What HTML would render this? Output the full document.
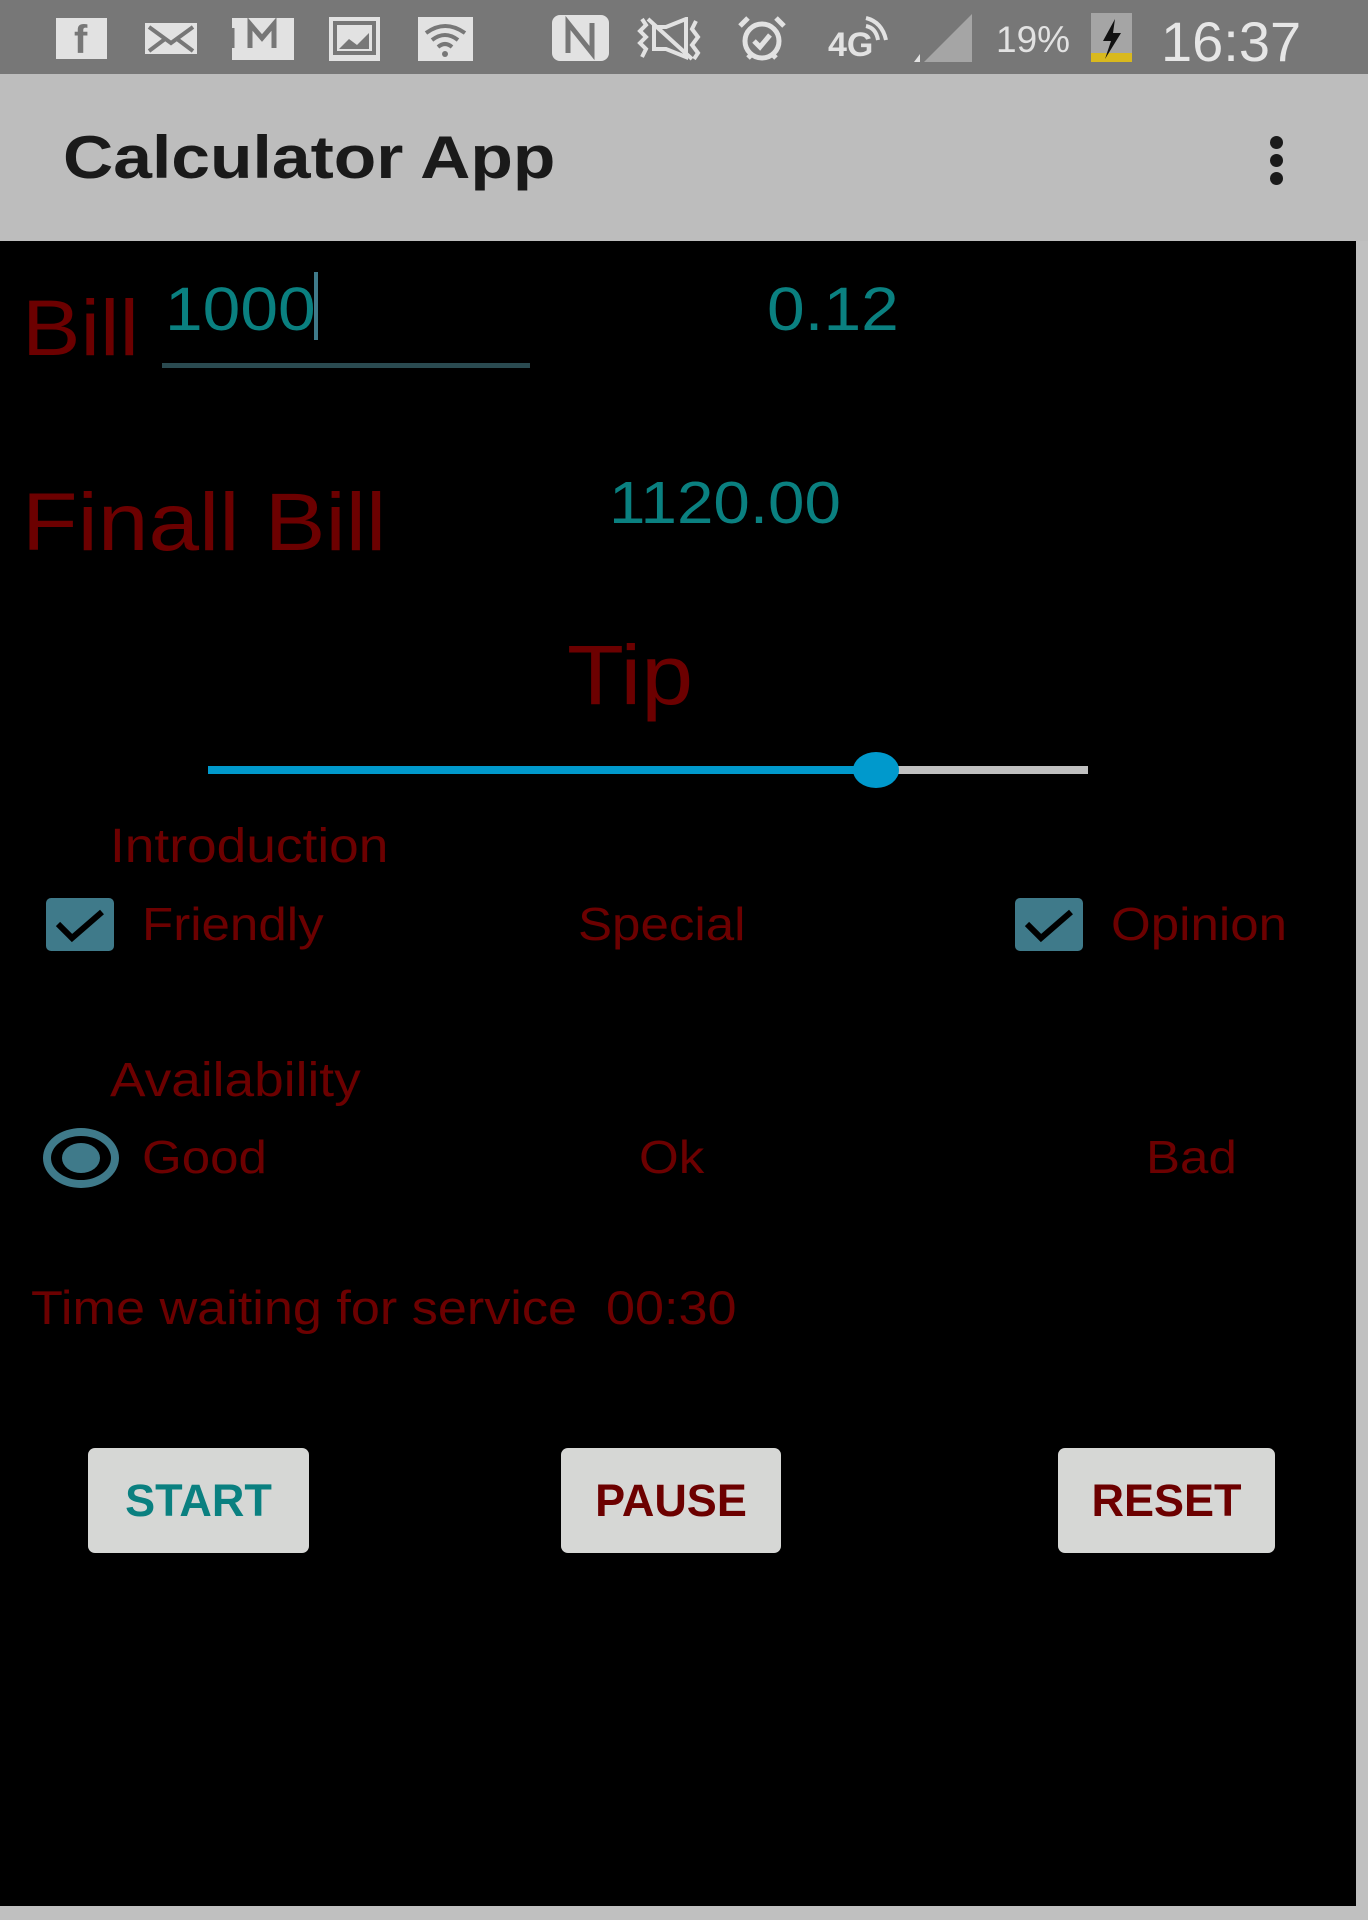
<!DOCTYPE html>
<html><head><meta charset="utf-8">
<style>
html,body{margin:0;padding:0;}
body{width:1368px;height:1920px;background:#000;position:relative;overflow:hidden;font-family:"Liberation Sans",sans-serif;}
.t{position:absolute;line-height:1;white-space:pre;transform-origin:0 0;transform:scaleX(1.11);}
.r{color:#6c0000;}
.c{color:#0a8080;}
.btn{position:absolute;top:1448px;height:105px;background:#d6d7d5;border-radius:7px;font-weight:bold;font-size:45px;text-align:center;line-height:105px;}
.ic{position:absolute;background:#e2e2e2;}
</style></head><body>
<!-- status bar -->
<div style="position:absolute;left:0;top:0;width:1368px;height:74px;background:#777;"></div>
<div class="ic" style="left:56px;top:18px;width:51px;height:41px;"></div>
<div style="position:absolute;left:74px;top:18px;color:#777;font:bold 40px 'Liberation Sans',sans-serif;line-height:44px;">f</div>
<div class="ic" style="left:145px;top:23px;width:52px;height:31px;"></div>
<svg style="position:absolute;left:145px;top:23px" width="52" height="31"><path d="M4 4 L26 20 L48 4 M4 28 L20 16 M48 28 L32 16" stroke="#777" stroke-width="4" fill="none"/></svg>
<div class="ic" style="left:232px;top:18px;width:62px;height:42px;"></div>
<svg style="position:absolute;left:232px;top:18px" width="62" height="42"><path d="M0 10 V30 M18 30 V6 L30 20 L42 6 V30" stroke="#777" stroke-width="5" fill="none"/></svg>
<div class="ic" style="left:329px;top:17px;width:51px;height:44px;"></div>
<svg style="position:absolute;left:329px;top:17px" width="51" height="44"><rect x="6" y="6" width="39" height="30" fill="none" stroke="#777" stroke-width="4"/><path d="M10 32 L20 22 L28 28 L40 16 V32Z" fill="#777"/></svg>
<div class="ic" style="left:418px;top:17px;width:55px;height:44px;"></div>
<svg style="position:absolute;left:418px;top:17px" width="55" height="44"><path d="M8 16 Q27 2 47 16 M14 23 Q27 13 40 23 M20 30 Q27 24 34 30" stroke="#777" stroke-width="4" fill="none"/><circle cx="27" cy="37" r="3" fill="#777"/></svg>
<div class="ic" style="left:552px;top:15px;width:57px;height:46px;border-radius:8px;"></div>
<svg style="position:absolute;left:552px;top:15px" width="57" height="46"><path d="M16 38 V8 L40 38 V8" stroke="#777" stroke-width="5" fill="none"/></svg>
<svg style="position:absolute;left:630px;top:17px" width="80" height="44"><path d="M12 2 L16 8 L10 14 L16 20 L10 26 L16 32 L12 40 M24 10 H36 L56 2 V40 L36 32 H24Z M18 2 L62 42 M66 4 L62 12 L68 20 L62 28 L68 36 L64 42" stroke="#e2e2e2" stroke-width="4" fill="none"/></svg>
<svg style="position:absolute;left:734px;top:14px" width="56" height="50"><circle cx="28" cy="27" r="17" stroke="#e2e2e2" stroke-width="5" fill="none"/><path d="M20 27 L26 33 L36 21 M6 12 L14 4 M50 12 L42 4 M14 44 L18 40 M42 44 L38 40" stroke="#e2e2e2" stroke-width="5" fill="none"/></svg>
<div style="position:absolute;left:828px;top:28px;color:#e2e2e2;font:bold 34px 'Liberation Sans',sans-serif;line-height:1;">4G</div>
<svg style="position:absolute;left:862px;top:14px" width="30" height="30"><path d="M4 4 Q20 8 24 26 M4 12 Q14 14 16 26" stroke="#e2e2e2" stroke-width="4" fill="none"/></svg>
<svg style="position:absolute;left:910px;top:14px" width="64" height="48"><path d="M62 0 V48 H14Z" fill="#a5a5a5"/><path d="M10 40 L10 48 L4 48Z" fill="#e2e2e2"/></svg>
<div style="position:absolute;left:996px;top:21px;color:#e2e2e2;font-size:37px;line-height:1;">19%</div>
<div style="position:absolute;left:1091px;top:13px;width:41px;height:49px;background:#a5a5a5;"></div>
<div style="position:absolute;left:1091px;top:53px;width:41px;height:9px;background:#d9b91e;"></div>
<svg style="position:absolute;left:1091px;top:13px" width="41" height="49"><path d="M24 6 L12 28 H20 L14 46 L30 20 H22Z" fill="#111"/></svg>
<div style="position:absolute;left:1161px;top:14px;color:#e6e6e6;font-size:56px;line-height:1;">16:37</div>
<!-- toolbar -->
<div style="position:absolute;left:0;top:74px;width:1368px;height:167px;background:#bdbdbd;"></div>
<div style="position:absolute;left:63px;top:128px;color:#1a1a1a;font-weight:bold;font-size:60px;line-height:1;transform-origin:0 0;transform:scaleX(1.16);">Calculator App</div>
<div style="position:absolute;left:1270px;top:136px;width:13px;height:13px;border-radius:50%;background:#1a1a1a;"></div>
<div style="position:absolute;left:1270px;top:154px;width:13px;height:13px;border-radius:50%;background:#1a1a1a;"></div>
<div style="position:absolute;left:1270px;top:172px;width:13px;height:13px;border-radius:50%;background:#1a1a1a;"></div>
<!-- borders -->
<div style="position:absolute;left:1356px;top:241px;width:12px;height:1679px;background:#c0c0c0;"></div>
<div style="position:absolute;left:0;top:1906px;width:1368px;height:14px;background:#c0c0c0;"></div>
<!-- content -->
<div class="t r" style="left:22px;top:288px;font-size:79px;">Bill</div>
<div class="t c" style="left:165px;top:279px;font-size:61px;">1000</div>
<div style="position:absolute;left:314px;top:272px;width:4px;height:68px;background:#3f7a8a;"></div>
<div style="position:absolute;left:162px;top:363px;width:368px;height:5px;background:#2a4a50;"></div>
<div class="t c" style="left:767px;top:279px;font-size:61px;">0.12</div>
<div class="t r" style="left:22px;top:482px;font-size:82px;">Finall Bill</div>
<div class="t c" style="left:609px;top:474px;font-size:59px;">1120.00</div>
<div class="t r" style="left:567px;top:633px;font-size:84px;">Tip</div>
<div style="position:absolute;left:208px;top:766px;width:668px;height:8px;background:#0099cc;"></div>
<div style="position:absolute;left:876px;top:766px;width:212px;height:8px;background:#c0c0c0;"></div>
<div style="position:absolute;left:853px;top:752px;width:46px;height:36px;border-radius:50%;background:#0099cc;"></div>
<div class="t r" style="left:110px;top:823px;font-size:48px;">Introduction</div>
<div style="position:absolute;left:46px;top:898px;width:68px;height:53px;border-radius:5px;background:#3f7a8a;"></div>
<svg style="position:absolute;left:46px;top:898px" width="68" height="53"><path d="M12 26 L26 40 L56 14" stroke="#000" stroke-width="6" fill="none"/></svg>
<div class="t r" style="left:142px;top:901px;font-size:46px;">Friendly</div>
<div class="t r" style="left:578px;top:901px;font-size:46px;">Special</div>
<div style="position:absolute;left:1015px;top:898px;width:68px;height:53px;border-radius:5px;background:#3f7a8a;"></div>
<svg style="position:absolute;left:1015px;top:898px" width="68" height="53"><path d="M12 26 L26 40 L56 14" stroke="#000" stroke-width="6" fill="none"/></svg>
<div class="t r" style="left:1111px;top:901px;font-size:46px;">Opinion</div>
<div class="t r" style="left:110px;top:1057px;font-size:48px;">Availability</div>
<div style="position:absolute;left:43px;top:1128px;width:60px;height:44px;border:8px solid #3f7a8a;border-radius:50%;"></div>
<div style="position:absolute;left:62px;top:1143px;width:38px;height:30px;border-radius:50%;background:#3f7a8a;"></div>
<div class="t r" style="left:142px;top:1134px;font-size:46px;">Good</div>
<div class="t r" style="left:639px;top:1134px;font-size:46px;">Ok</div>
<div class="t r" style="left:1146px;top:1134px;font-size:46px;">Bad</div>
<div class="t r" style="left:31px;top:1284px;font-size:47px;">Time waiting for service  00:30</div>
<div class="btn" style="left:88px;width:221px;color:#0a8080;">START</div>
<div class="btn" style="left:561px;width:220px;color:#6c0000;">PAUSE</div>
<div class="btn" style="left:1058px;width:217px;color:#6c0000;">RESET</div>
</body></html>
